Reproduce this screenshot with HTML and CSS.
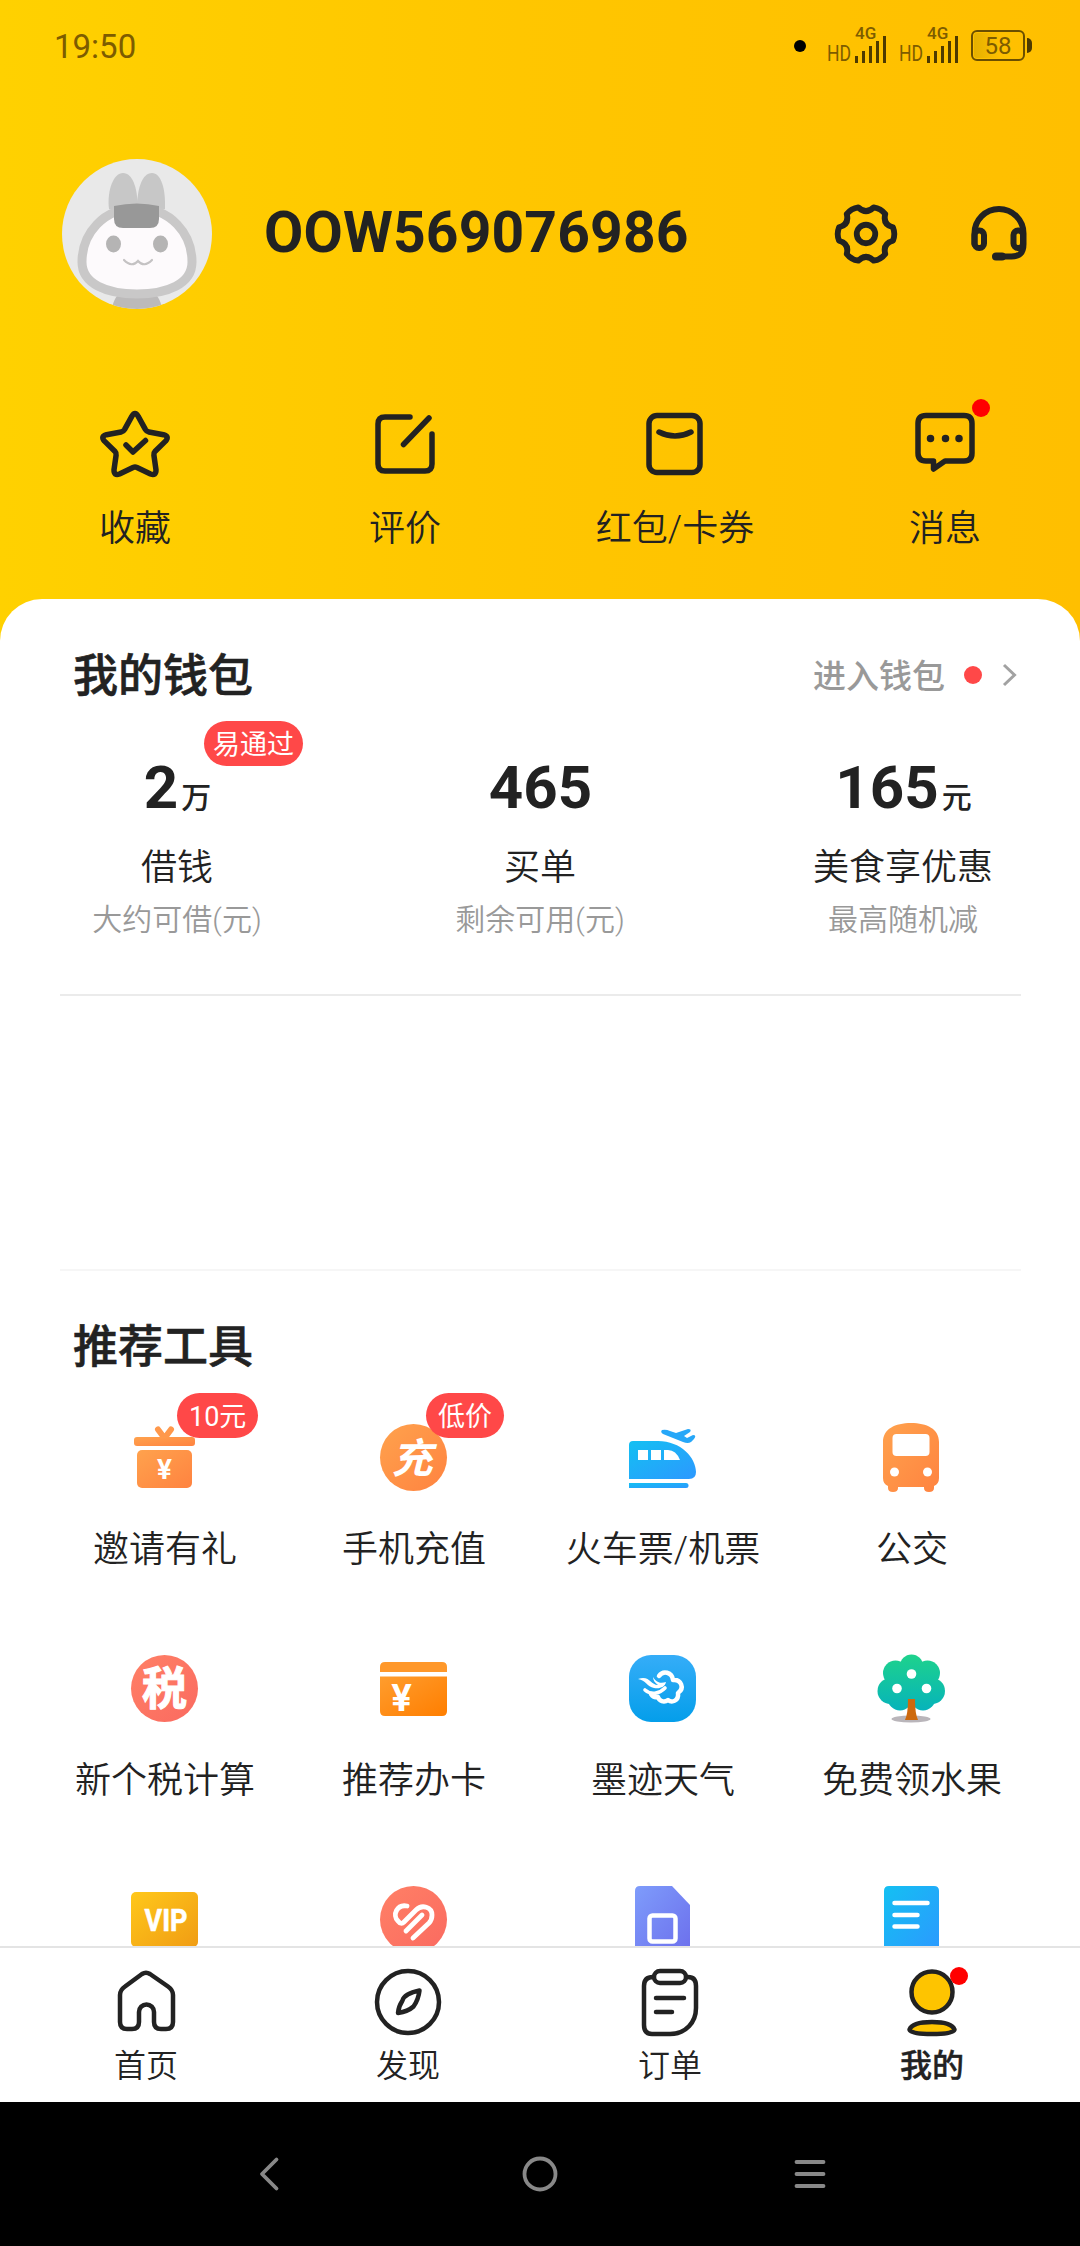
FILE: index.html
```html
<!DOCTYPE html>
<html lang="zh-CN">
<head>
<meta charset="utf-8">
<title>我的</title>
<link rel="stylesheet" href="styles.css">
</head>
<body>
<svg class="defs" width="0" height="0" aria-hidden="true">
  <defs>
    <linearGradient id="orange" x1="0" y1="0" x2="1" y2="1"><stop offset="0" stop-color="#ffa24d"/><stop offset="1" stop-color="#ff8340"/></linearGradient>
    <linearGradient id="deep" x1="0" y1="0" x2="1" y2="1"><stop offset="0" stop-color="#ff9d2e"/><stop offset="1" stop-color="#ff7e00"/></linearGradient>
    <linearGradient id="coral" x1="0" y1="0" x2="1" y2="1"><stop offset="0" stop-color="#ff8066"/><stop offset="1" stop-color="#fa6a60"/></linearGradient>
    <linearGradient id="blue" x1="0" y1="0" x2="1" y2="1"><stop offset="0" stop-color="#14c0f2"/><stop offset="1" stop-color="#2c98ff"/></linearGradient>
    <linearGradient id="sky" x1="0" y1="0" x2="0" y2="1"><stop offset="0" stop-color="#35adf8"/><stop offset="1" stop-color="#049eea"/></linearGradient>
    <linearGradient id="gold" x1="0" y1="0" x2="1" y2="1"><stop offset="0" stop-color="#ffc81a"/><stop offset="1" stop-color="#f09c14"/></linearGradient>
    <linearGradient id="violet" x1="0" y1="0" x2="1" y2="1"><stop offset="0" stop-color="#7e9cfb"/><stop offset="1" stop-color="#6c6eec"/></linearGradient>
    <linearGradient id="green" gradientUnits="userSpaceOnUse" x1="0" y1="2" x2="0" y2="58"><stop offset="0" stop-color="#1ed28c"/><stop offset="1" stop-color="#06b3bb"/></linearGradient>
  </defs>
</svg>
<div class="phone">
  <main class="app">
    <div class="status">
      <span class="time">19:50</span>
      <div class="indicators">
        <i class="notice"></i>
        <div class="signal"><span class="hd">HD</span><div class="net"><b>4G</b>
          <svg width="32" height="28" viewBox="0 0 32 28"><path d="M1.500 21v7M8.500 16v12M15.500 11v17M22.500 6v22M29.500 1v27" stroke="#4e3a00" stroke-width="3"/></svg></div></div>
        <div class="signal"><span class="hd">HD</span><div class="net"><b>4G</b>
          <svg width="32" height="28" viewBox="0 0 32 28"><path d="M1.500 21v7M8.500 16v12M15.500 11v17M22.500 6v22M29.500 1v27" stroke="#4e3a00" stroke-width="3"/></svg></div></div>
        <div class="battery"><span class="cell">58</span><i class="tip"></i></div>
      </div>
    </div>

    <header class="profile">
      <svg class="avatar" viewBox="0 0 150 150">
        <clipPath id="round"><circle cx="75" cy="75" r="75"/></clipPath>
        <g clip-path="url(#round)">
          <rect width="150" height="150" fill="#e9e9e9"/>
          <path d="M47 50C45 30 52 14 61 14c10 0 14 16 14.500 28C76 30 80 14 90 14c9 0 14 16 13 36z" fill="#c7c7c7"/>
          <path d="M50 152c0-9 5-18 12-20h26c7 2 12 11 12 20z" fill="#bcbaba"/>
          <path d="M75 49c34 0 55 26 55 54 0 22-25 32-55 32s-55-10-55-32c0-28 21-54 55-54z" fill="#fdfafc" stroke="#c9c8c8" stroke-width="9"/>
          <path d="M52 47q23-5 45 0v13q0 9-9 9H61q-9 0-9-9z" fill="#989898"/>
          <ellipse cx="51.500" cy="85" rx="7.500" ry="8.500" fill="#b5b4b4"/><ellipse cx="98.500" cy="85" rx="7.500" ry="8.500" fill="#b5b4b4"/>
          <path d="M62 101q8 8 14 1 6 7 14-1" fill="none" stroke="#c4c2c3" stroke-width="2.200" stroke-linecap="round"/>
        </g>
      </svg>
      <h1 class="name">OOW569076986</h1>
      <div class="actions">
        <svg class="line" width="72" height="72" viewBox="-37 -37 74 74"><path d="M27.700-6.900Q30.500 0 27.700 6.900Q17 9.800 19.800 20.500Q15.200 26.400 7.900 27.400Q0 19.600-7.900 27.400Q-15.200 26.400-19.800 20.500Q-17 9.800-27.700 6.900Q-30.500 0-27.700-6.900Q-17-9.800-19.800-20.500Q-15.200-26.400-7.900-27.400Q0-19.600 7.900-27.400Q15.200-26.400 19.800-20.500Q17-9.800 27.700-6.900Z"/><circle r="9.500"/></svg>
        <svg class="line" width="72" height="72" viewBox="0 0 72 72"><path d="M11.500 46V35.500a24.500 24.500 0 0 1 49 0V46c0 10-5 12.500-12 12.500H37"/><rect x="11.500" y="32.500" width="9.500" height="17.500" rx="4.500"/><rect x="50.500" y="32.500" width="9.500" height="17.500" rx="4.500"/><path d="M33 58.500h6" stroke-width="8"/></svg>
      </div>
    </header>

    <nav class="quick">
      <a class="quick-item"><svg class="line" width="72" height="72" viewBox="0 0 72 72"><path d="M32.800 8.400q3.200-5.800 6.400 0l7.300 13.200q1.200 2 3.400 2.400l14.600 2.700q6.200 1.600 2 6.400L56.200 43.200q-1.600 1.700-1.300 4l2.100 14.600q.1 6.200-5.500 4.200L38 59.500q-2-.9-4 0L20.500 66q-5.600 2-5.500-4.200l2.100-14.600q.3-2.300-1.300-4L5.500 33.100q-4.200-4.800 2-6.400L22.100 24q2.200-.4 3.400-2.400z"/><path d="M27 37l7 7 12.500-11.500"/></svg><span>收藏</span></a>
      <a class="quick-item"><svg class="line" width="72" height="72" viewBox="0 0 72 72"><path d="M41 9H16q-7 0-7 7v40q0 7 7 7h40q7 0 7-7V26M60 10L34.500 36.500"/></svg><span>评价</span></a>
      <a class="quick-item"><svg class="line" width="72" height="72" viewBox="0 0 72 72"><rect x="10" y="7.500" width="51" height="57" rx="8"/><path d="M20 24q16 8 32 0"/></svg><span>红包/卡券</span></a>
      <a class="quick-item"><svg class="line" width="72" height="72" viewBox="0 0 72 72"><path d="M17 7.500h38q8 0 8 8V45q0 8-8 8H36l-11.500 8V53H17q-8 0-8-8V15.500q0-8 8-8z"/><path d="M21.500 30.500h.01M36.500 30.500h.01M50 30.500h.01" stroke-width="7.500"/></svg><i class="dot"></i><span>消息</span></a>
    </nav>

    <div class="sheet">
      <section class="wallet">
        <div class="heading"><h2>我的钱包</h2><a class="enter">进入钱包<i></i><svg width="15" height="24" viewBox="0 0 15 24"><path d="M2 2l10.500 10L2 22" fill="none" stroke="#a2a2a2" stroke-width="3"/></svg></a></div>
        <div class="amounts">
          <div class="amount"><strong>2<small>万</small></strong><span>借钱</span><em>大约可借(元)</em><b class="tag tag-loan">易通过</b></div>
          <div class="amount"><strong>465</strong><span>买单</span><em>剩余可用(元)</em></div>
          <div class="amount"><strong>165<small>元</small></strong><span>美食享优惠</span><em>最高随机减</em></div>
        </div>
      </section>
      <div class="banner"></div>
      <section class="tools">
        <div class="heading"><h2>推荐工具</h2></div>
        <div class="tool-grid">
          <a class="tool"><svg viewBox="0 0 72 72"><path d="M30 7.500l6 8M43 7.500l-6 8" stroke="#ff984b" stroke-width="6" stroke-linecap="round"/><rect x="6" y="15" width="61" height="9" rx="3" fill="url(#orange)"/><rect x="9" y="28" width="55" height="38" rx="5" fill="url(#orange)"/><text x="36.500" y="57" class="glyph yen" font-size="27">¥</text></svg><b class="tag tag-gift">10元</b><span>邀请有礼</span></a>
          <a class="tool"><svg viewBox="0 0 72 72"><circle cx="36.500" cy="35.500" r="33.500" fill="url(#orange)"/><text x="35" y="51" class="glyph slant" font-size="41">充</text></svg><b class="tag tag-phone">低价</b><span>手机充值</span></a>
          <a class="tool"><svg viewBox="0 0 72 72"><path fill-rule="evenodd" fill="url(#blue)" d="M3 57V23q0-4 4-4h25c23 0 38 17 38 31q0 7-7 7zM12 28v10h10V28zM25 28v10h10V28zM38 28v10h16q-4-10-12-10z"/><path d="M3 61h57a2.500 2.500 0 0 1 0 5H3z" fill="url(#blue)"/><path d="M36 8q4-1 8 1l6 2 12-4q4 0 2 3l-6 4 3 2 6-3q4 0 1 4l-3 3q-3 2-8 0L37 12q-3-2-1-4z" fill="#26a7f8"/></svg><span>火车票/机票</span></a>
          <a class="tool"><svg viewBox="0 0 72 72"><path fill="url(#orange)" d="M8 20C8 7 20 1 36 1s28 6 28 19v36q0 6-5 8v2q0 4-5 4t-5-4v-1H23v1q0 4-5 4t-5-4v-2q-5-2-5-8z"/><rect x="17.500" y="12" width="37" height="22" rx="4" fill="#fff"/><circle cx="19.500" cy="50" r="4.500" fill="#fff"/><circle cx="52.500" cy="50" r="4.500" fill="#fff"/></svg><span>公交</span></a>
          <a class="tool"><svg viewBox="0 0 72 72"><circle cx="36.500" cy="35.500" r="33.500" fill="url(#coral)"/><text x="36.500" y="52" class="glyph heavy" font-size="45">税</text></svg><span>新个税计算</span></a>
          <a class="tool"><svg viewBox="0 0 72 72"><path d="M3 19v-5q0-5 5-5h57q5 0 5 5v5z" fill="#ff982a"/><path d="M3 23.500h67V58q0 5-5 5H8q-5 0-5-5z" fill="url(#deep)"/><text x="24.500" y="57.500" class="glyph yen" font-size="37">¥</text></svg><span>推荐办卡</span></a>
          <a class="tool"><svg viewBox="0 0 72 72"><rect x="3" y="2" width="67" height="67" rx="22" fill="url(#sky)"/><g fill="none" stroke="#fff" stroke-linecap="round" stroke-linejoin="round"><path d="M33 23c4-6 13-4 14 4 8-1 12 8 5 13 1 8-6 10-10 7-4 3-9 1-10-3-3 1-5 0-7-3" stroke-width="4.500"/><path d="M19 37c7 6 15 3 20-2" stroke-width="3.600"/></g><path d="M12 26c12-4 12 6 20 6-3-2-5-5-5-8 4 7 9 6 13 5-1 5-6 7-12 6-7-1-8-8-16-9z" fill="#fff"/></svg><span>墨迹天气</span></a>
          <a class="tool"><svg viewBox="0 0 72 72"><ellipse cx="36" cy="66" rx="19.500" ry="3.500" fill="#b9b5ba"/><g fill="url(#green)"><circle cx="36.500" cy="13" r="11.500"/><circle cx="20.500" cy="20" r="12.500"/><circle cx="52.500" cy="20" r="12.500"/><circle cx="15.500" cy="38" r="13"/><circle cx="57" cy="38" r="13"/><circle cx="25" cy="45" r="12.500"/><circle cx="48" cy="45" r="12.500"/><circle cx="36.500" cy="32" r="18"/></g><path d="M33 46h7q0 15 3 21H30q3-6 3-21z" fill="#cd690d"/><g fill="#fff"><circle cx="36.500" cy="21" r="4.800"/><circle cx="22" cy="35.500" r="4.800"/><circle cx="51.500" cy="35.500" r="4.800"/></g></svg><span>免费领水果</span></a>
          <a class="tool"><svg viewBox="0 0 72 72"><rect x="3" y="8" width="67" height="55" rx="5" fill="url(#gold)"/><text x="38" y="47" class="glyph vip" font-size="31" textLength="43" lengthAdjust="spacingAndGlyphs">VIP</text></svg></a>
          <a class="tool"><svg viewBox="0 0 72 72"><circle cx="36.500" cy="35.500" r="33.500" fill="url(#coral)"/><g fill="none" stroke="#fff" stroke-width="4.800" stroke-linecap="round" stroke-linejoin="round"><path d="M30 22c-10-2-15 9-9 15q3 4 6 1L39 26c6-6 16-3 16 5 0 4-1 6-3 8L36 54"/><path d="M29 47l16-16"/></g></svg></a>
          <a class="tool"><svg viewBox="0 0 72 72"><path d="M9 7q0-5 5-5h32l18 19v51H9z" fill="url(#violet)"/><rect x="23.500" y="31.500" width="26" height="26" rx="3" fill="none" stroke="#fff" stroke-width="4.500"/></svg></a>
          <a class="tool"><svg viewBox="0 0 72 72"><path d="M9 7q0-5 5-5h45q5 0 5 5v65H9z" fill="url(#blue)"/><path d="M19.500 19h33M19.500 31h23M19.500 42.500h23" stroke="#fff" stroke-width="4.500" stroke-linecap="round"/></svg></a>
        </div>
      </section>
    </div>
  </main>

  <nav class="tabs">
    <a class="tab"><svg class="line" width="72" height="72" viewBox="0 0 72 72"><path d="M32 8q4-2.500 8 0l18 12.500q5 3.500 5 8.500v27q0 7-7 7h-5q-7 0-7-7V46a7.500 7.500 0 0 0-15 0v10q0 7-7 7h-5q-7 0-7-7V29q0-5 5-8.500z"/></svg><span>首页</span></a>
    <a class="tab"><svg class="line" width="72" height="72" viewBox="0 0 72 72"><circle cx="36" cy="36" r="31"/><path d="M47.500 24.500q-15 3-17 10-4 6-4.500 12.500 10-1.500 15.500-6.500 5-7 6-16z"/></svg><span>发现</span></a>
    <a class="tab"><svg class="line" width="72" height="72" viewBox="0 0 72 72"><path d="M19 11q-9 0-9 9v39q0 9 8 9h18c16 0 26-12 26-26V20q0-9-8-9"/><rect x="20" y="5" width="32" height="12" rx="6"/><path d="M22 32h28M22 46h16"/></svg><span>订单</span></a>
    <a class="tab active"><svg class="line" width="72" height="72" viewBox="0 0 72 72"><circle cx="36" cy="26" r="20.500" fill="#fec400"/><path d="M13.500 63.500q3-7.500 22.500-7.500t22.500 7.500q0 4.500-22.500 4.500t-22.500-4.500z" fill="#fec400"/></svg><i class="dot"></i><span>我的</span></a>
  </nav>

  <div class="system">
    <svg width="60" height="60" viewBox="0 0 60 60"><path d="M36.500 15.500L22 30l14.500 14.500"/></svg>
    <svg width="60" height="60" viewBox="0 0 60 60"><circle cx="30" cy="30" r="15.500"/></svg>
    <svg width="60" height="60" viewBox="0 0 60 60"><path d="M16.500 18h27M16.500 30h27M16.500 42h27"/></svg>
  </div>
</div>
</body>
</html>
```
FILE: styles.css
```css
* { box-sizing: border-box; margin: 0; padding: 0; }
body { background: #fff; font-family: Roboto, "Noto Sans CJK SC", sans-serif; color: #222; }
i, em { font-style: normal; }
svg { display: block; flex: none; }
.defs { position: absolute; }
.phone { width: 1080px; height: 2246px; display: flex; flex-direction: column; overflow: hidden; }
.app { height: 1946px; overflow: hidden; background: linear-gradient(90deg, #ffd100, #ffc600 48%, #ffbf00); }

.status { height: 92px; padding: 0 48px 0 54px; display: flex; align-items: center; justify-content: space-between; color: #7d5c00; }
.time { font-size: 33px; line-height: 40px; padding-top: 1px; }
.indicators { display: flex; align-items: center; }
.notice { width: 12px; height: 12px; border-radius: 50%; background: #000; margin: 0 21px 1px 0; }
.signal { display: flex; align-items: flex-end; height: 34px; margin-right: 12px; }
.hd { font-size: 22px; line-height: 18px; width: 24px; margin-right: 4px; transform: scaleX(.8); transform-origin: left; }
.net { position: relative; }
.net b { position: absolute; left: 0; bottom: 21px; font-size: 17px; line-height: 18px; font-weight: 500; }
.battery { display: flex; align-items: center; gap: 2px; padding-bottom: 1px; }
.cell { width: 54px; height: 31px; border: 2px solid #6b4f00; border-radius: 6px; text-align: center; font-size: 24px; font-weight: 400; line-height: 27px; background: linear-gradient(90deg, #e5b000, transparent 26px) content-box; padding: 1px; }
.tip { width: 5px; height: 15px; border-radius: 0 5px 5px 0; background: #4e3a00; }

.profile { margin-top: 67px; height: 150px; padding: 0 45px 0 62px; display: flex; align-items: center; }
.avatar { width: 150px; height: 150px; }
.name { margin: -3px 0 0 52px; font-size: 57px; line-height: 70px; font-weight: 700; letter-spacing: .15px; }
.actions { margin-left: auto; display: flex; gap: 61px; }
.line { fill: none; stroke: #222; stroke-width: 5.5; stroke-linecap: round; stroke-linejoin: round; }
.actions .line { stroke-width: 6; }

.quick { margin-top: 99px; display: grid; grid-template-columns: repeat(4, 1fr); padding-bottom: 50px; }
.quick-item { position: relative; display: flex; flex-direction: column; align-items: center; gap: 29px; font-size: 36px; line-height: 40px; font-weight: 350; }
.dot { position: absolute; width: 18px; height: 18px; border-radius: 50%; background: #f00; }
.quick .dot { left: 162px; top: -9px; }

.sheet { background: #fff; border-radius: 42px 42px 0 0; padding-top: 53px; }
.heading { display: flex; align-items: center; justify-content: space-between; padding: 0 63px 0 73px; height: 50px; }
.heading h2 { font-size: 45px; line-height: 50px; font-weight: 500; -webkit-text-stroke: .6px #222; }
.enter { display: flex; align-items: center; font-size: 33px; font-weight: 500; color: #999; line-height: 50px; }
.enter i { width: 18px; height: 18px; border-radius: 50%; background: #ff4848; margin: 0 20px 5px 19px; }
.enter svg { margin-bottom: 5px; }
.amounts { margin: 56px 57px 0; display: flex; justify-content: space-between; }
.amount { position: relative; width: 240px; display: flex; flex-direction: column; align-items: center; }
.amount strong { font-size: 60px; line-height: 60px; height: 60px; font-weight: 700; padding-left: 1px; }
.amount small { font-size: 30px; font-weight: 500; line-height: 30px; margin-left: 3px; }
.amount span { margin-top: 30px; font-size: 36px; line-height: 40px; font-weight: 350; }
.amount em { margin-top: 14px; font-size: 30px; line-height: 36px; color: #999; font-weight: 350; }
.tag { position: absolute; height: 45px; border-radius: 23px; padding: 0 12px; background: #ff4848; color: #fff; font-size: 27px; font-weight: 400; line-height: 48px; white-space: nowrap; }
.tag-loan { left: 147px; top: -37px; padding: 0 9px; }
.tag-gift { left: 137px; top: -29px; }
.tag-phone { left: 137px; top: -29px; }
.banner { margin: 56px 59px 0 60px; height: 277px; border-top: 2px solid #ebebeb; border-bottom: 2px solid #f6f6f6; }
.tools { padding-top: 52px; }
.tool-grid { margin: 49px 42px 0 40px; display: grid; grid-template-columns: repeat(4, 249px); row-gap: 83px; }
.tool { position: relative; display: flex; flex-direction: column; align-items: center; gap: 36px; font-size: 36px; line-height: 40px; white-space: nowrap; font-weight: 350; }
.tool span { padding-left: 1px; }
.tool svg { width: 72px; height: 72px; margin-right: 2px; }
.glyph { fill: #fff; font-weight: 700; text-anchor: middle; }
.heavy { stroke: #fff; stroke-width: 1; }
.yen { font-family: Inter, sans-serif; }
.vip { stroke: #fff; stroke-width: .6; stroke-linejoin: round; }
.slant { font-style: italic; }

.tabs { height: 156px; background: #fff; border-top: 2px solid #e4e4e4; padding: 18px 17px 0 15px; display: grid; grid-template-columns: repeat(4, 1fr); }
.tab { position: relative; display: flex; flex-direction: column; align-items: center; gap: 10px; font-size: 32px; line-height: 36px; font-weight: 350; }
.tab .line { stroke-width: 4.5; }
.tabs .active { font-weight: 500; -webkit-text-stroke: .4px #222; }
.tab .dot { left: 149px; top: 1px; }
.system { height: 144px; background: #000; display: flex; justify-content: space-between; align-items: center; padding: 0 240px; }
.system svg { fill: none; stroke: #888; stroke-width: 3.8; stroke-linecap: round; stroke-linejoin: round; }
```
